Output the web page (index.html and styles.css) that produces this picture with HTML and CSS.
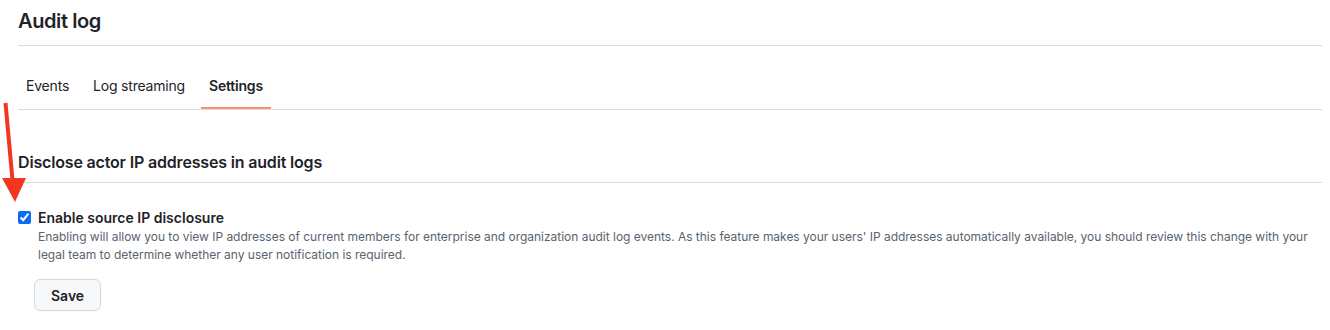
FILE: index.html
```html
<!DOCTYPE html>
<html lang="en">
<head>
    <meta charset="UTF-8">
    <title>Audit log</title>
    <link rel="stylesheet" href="styles.css">
</head>
<body>
    <div class="subhead">
        <h2 class="subhead-title">Audit log</h2>
    </div>

    <nav class="tabs">
        <a href="#" class="tab">Events</a>
        <a href="#" class="tab">Log streaming</a>
        <a href="#" class="tab selected">Settings</a>
    </nav>

    <div class="section-head">
        <h3>Disclose actor IP addresses in audit logs</h3>
    </div>

    <form class="settings-form">
        <div class="check-row">
            <input type="checkbox" id="ip-disclosure" checked>
            <label for="ip-disclosure">Enable source IP disclosure</label>
        </div>
        <p class="note">Enabling will allow you to view IP addresses of current members for enterprise and organization audit log events. As this feature makes your users' IP addresses automatically available, you should review this change with your legal team to determine whether any user notification is required.</p>
        <button type="button" class="btn">Save</button>
    </form>

    <!-- annotation arrow drawn over the page -->
    <svg class="arrow" width="30" height="210" viewBox="0 0 30 210">
        <line x1="5.5" y1="103" x2="12.5" y2="180" stroke="#f2361f" stroke-width="4"/>
        <polygon points="2,178 26,178 15,202" fill="#f2361f"/>
    </svg>
</body>
</html>
```

FILE: styles.css
```css
body {
    margin: 0;
    padding: 0 8px 0 18px;
    font-family: Inter, "Liberation Sans", Arial, sans-serif;
    color: #1f2328;
    background: #ffffff;
    position: relative;
}

.subhead {
    padding: 6px 0 9px;
    border-bottom: 1px solid #d8dee4;
}

.subhead-title {
    margin: 0;
    font-size: 20px;
    line-height: 30px;
    font-weight: 600;
    letter-spacing: -0.4px;
}

.tabs {
    display: flex;
    gap: 8px;
    margin-top: 15px;
    border-bottom: 1px solid #d8dee4;
}

.tab {
    display: flex;
    align-items: center;
    height: 48px;
    box-sizing: border-box;
    padding: 3px 8px 0;
    font-size: 14px;
    line-height: 21px;
    letter-spacing: -0.2px;
    color: #1f2328;
    text-decoration: none;
    border-bottom: 2px solid transparent;
}

.tab.selected {
    font-weight: 600;
    border-bottom-color: #fd8c73;
}

.section-head {
    margin-top: 40px;
    padding-bottom: 8px;
    border-bottom: 1px solid #d8dee4;
}

.section-head h3 {
    margin: 0;
    font-size: 16px;
    line-height: 24px;
    font-weight: 600;
    letter-spacing: -0.17px;
}

.settings-form {
    margin-top: 25px;
}

.check-row {
    display: flex;
    align-items: flex-start;
}

.check-row input {
    width: 13px;
    height: 13px;
    margin: 3px 7px 0 0;
    accent-color: #0a6cf5;
}

.check-row label {
    font-size: 14px;
    line-height: 20px;
    font-weight: 600;
}

.note {
    margin: 0 0 15px 20px;
    font-size: 12px;
    line-height: 18px;
    letter-spacing: -0.02px;
    color: #59636e;
}

.btn {
    margin-left: 16px;
    height: 32px;
    padding: 0 16px;
    font-family: inherit;
    font-size: 14px;
    font-weight: 600;
    color: #1f2328;
    background: #f6f8fa;
    border: 1px solid #d1d9e0;
    border-radius: 6px;
}

.arrow {
    position: absolute;
    left: 0;
    top: 0;
}
```
